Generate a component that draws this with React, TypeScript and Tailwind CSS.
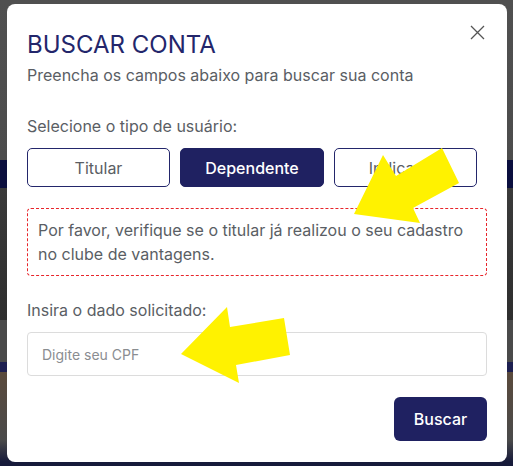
import React from "react";

export default function App() {
  return (
    <div
      className="relative w-[513px] h-[466px] overflow-hidden pt-[4px] pl-[7px] bg-[linear-gradient(to_bottom,#505050_0px,#4c4c4c_160px,#0b0f3e_160px,#0b0f3e_188px,#3a3a3a_188px,#2e2e2e_320px,#4a4a4a_320px,#4a4a4a_362px,#1d1f50_362px,#1d1f50_372px,#5a4a3c_372px,#4a4a4a_440px,#161a3a_462px)]"
      style={{ fontFamily: "Inter, 'Noto Sans', sans-serif" }}
    >
      <div className="relative w-[500px] h-[458px] bg-white rounded-[8px] px-[20px] pt-[26px] flex flex-col">
        <button className="absolute right-[22px] top-[21px]">
          <svg width="15" height="15" viewBox="0 0 15 15" fill="none" stroke="#555" strokeWidth="1.3">
            <path d="M1 1 L14 14 M14 1 L1 14" />
          </svg>
        </button>
        <h1 className="text-[24px] leading-[30px] text-[#23266b] font-normal">BUSCAR CONTA</h1>
        <p className="mt-[4px] text-[16px] leading-[22px] text-[#5a5e64]">
          Preencha os campos abaixo para buscar sua conta
        </p>

        <p className="mt-[29px] text-[16px] leading-[22px] text-[#5a5e64]">Selecione o tipo de usuário:</p>
        <div className="mt-[11px] flex gap-[10px]">
          <button className="w-[143px] h-[39px] rounded-[5px] border border-[#23266b] bg-white text-[16px] text-[#5a5e64]">
            Titular
          </button>
          <button className="w-[144px] h-[39px] rounded-[5px] border border-[#1f2161] bg-[#1f2161] text-[16px] font-medium text-white">
            Dependente
          </button>
          <button className="w-[143px] h-[39px] rounded-[5px] border border-[#23266b] bg-white text-[16px] text-[#5a5e64]">
            Indicação
          </button>
        </div>

        <div className="mt-[21px] w-[460px] border border-dashed border-[#e8252b] rounded-[4px] px-[10px] py-[9px] text-[16px] leading-[24px] text-[#5a5e64]">
          Por favor, verifique se o titular já realizou o seu cadastro no clube de vantagens.
        </div>

        <p className="mt-[23px] text-[16px] leading-[22px] text-[#5a5e64]">Insira o dado solicitado:</p>
        <div className="mt-[11px] w-[460px] h-[44px] border border-[#dcdcdc] rounded-[4px] flex items-center px-[14px] text-[14px] text-[#8a8d91]">
          Digite seu CPF
        </div>

        <div className="mt-[21px] w-[460px] flex justify-end">
          <button className="w-[93px] h-[44px] rounded-[6px] bg-[#1f2161] text-white text-[16px] font-medium">
            Buscar
          </button>
        </div>
      </div>

      {/* yellow annotation arrows */}
      <svg className="absolute left-0 top-0" width="513" height="466" viewBox="0 0 513 466">
        <polygon fill="#fff200" points="354,214 383,155 396,176 442,148 459,183 413,208 420,223" />
        <polygon fill="#fff200" points="181,354 227,307 230,327 284,318 290,355 236,365 239,383" />
      </svg>
    </div>
  );
}
